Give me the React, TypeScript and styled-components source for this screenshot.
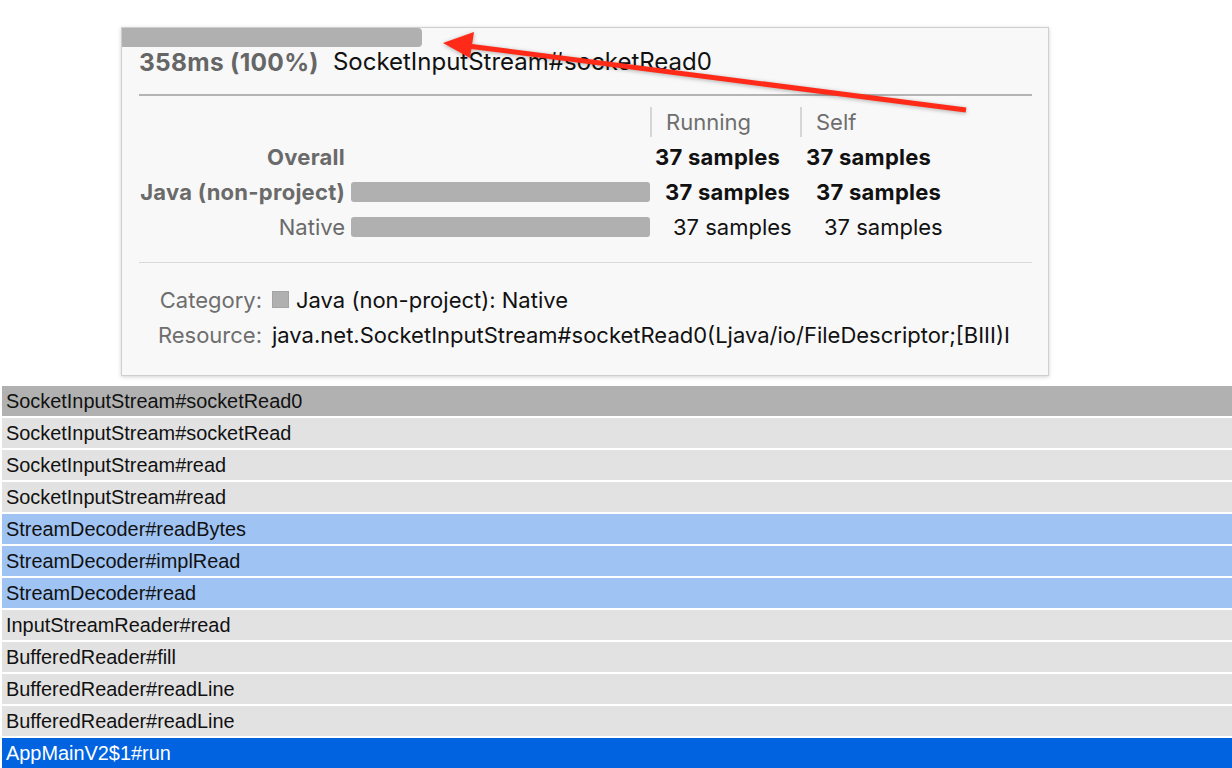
import React from 'react';
import styled, { createGlobalStyle } from 'styled-components';

const GlobalStyle = createGlobalStyle`
  html, body {
    margin: 0;
    padding: 0;
    background: #ffffff;
  }
  body {
    font-family: 'Liberation Sans', Arial, sans-serif;
    overflow: hidden;
  }
`;

const Page = styled.div`
  position: relative;
  width: 1232px;
  height: 768px;
  overflow: hidden;
  background: #ffffff;
`;

const GraphSpace = styled.div`
  height: 386px;
`;

const Frames = styled.div`
  display: flex;
  flex-direction: column;
  gap: 2px;
  padding-left: 2px;
`;

type Tone = 'selected' | 'plain' | 'project' | 'active';

const toneBg: Record<Tone, string> = {
  selected: '#b1b1b1',
  plain: '#e2e2e2',
  project: '#9fc3f3',
  active: '#0163e0',
};

const Frame = styled.div<{ $tone: Tone }>`
  height: 30px;
  display: flex;
  align-items: center;
  padding-left: 4px;
  background: ${(p) => toneBg[p.$tone]};
  color: ${(p) => (p.$tone === 'active' ? '#ffffff' : '#111111')};
  font-family: 'Liberation Sans', Arial, sans-serif;
  font-size: 19.9px;
  white-space: nowrap;
`;

const Tooltip = styled.div`
  position: absolute;
  left: 121px;
  top: 27px;
  width: 928px;
  height: 349px;
  box-sizing: border-box;
  background: #f8f8f8;
  border: 1px solid #cfcfcf;
  box-shadow: 0 1px 4px rgba(0, 0, 0, 0.18);
  font-family: Inter, 'Noto Sans', sans-serif;
  display: flex;
  flex-direction: column;
`;

const TopBar = styled.div`
  width: 300px;
  height: 19px;
  background: #b0b0b0;
  border-radius: 0 4px 4px 0;
`;

const Body = styled.div`
  padding: 0 16px 0 17px;
  display: flex;
  flex-direction: column;
`;

const Title = styled.div`
  display: flex;
  align-items: center;
  gap: 14px;
  height: 29px;
  font-size: 24px;
  color: #111;
  white-space: nowrap;
`;

const Duration = styled.span`
  font-weight: 700;
  font-size: 24.5px;
  letter-spacing: 0.3px;
  color: #666666;
`;

const TitleGap = styled.div`
  height: 18px;
`;

const Divider = styled.div<{ $strong?: boolean }>`
  height: ${(p) => (p.$strong ? '2px' : '1px')};
  background: ${(p) => (p.$strong ? '#b4b4b4' : '#d8d8d8')};
`;

const Table = styled.div`
  display: grid;
  grid-template-columns: 206px 305px 150px 1fr;
  grid-auto-rows: 35px;
  margin-top: 8px;
  margin-bottom: 18px;
  font-size: 22px;
`;

const Label = styled.div<{ $bold?: boolean }>`
  display: flex;
  align-items: center;
  justify-content: flex-end;
  color: #6a6a6a;
  font-weight: ${(p) => (p.$bold ? 700 : 400)};
  letter-spacing: ${(p) => (p.$bold ? '0.25px' : '0')};
  white-space: nowrap;
`;

const BarCell = styled.div`
  display: flex;
  align-items: center;
  padding-left: 6px;
`;

const Bar = styled.div`
  width: 299px;
  height: 20px;
  background: #b0b0b0;
  border-radius: 3px;
`;

const ColHead = styled.div`
  display: flex;
  align-items: center;
  padding-left: 14px;
  color: #6e6e6e;
  margin: 3px 0 0;
  border-left: 2px solid #d6d6d6;
  height: 30px;
`;

const Value = styled.div<{ $bold?: boolean; $indent: number }>`
  display: flex;
  align-items: center;
  padding-left: ${(p) => p.$indent}px;
  font-weight: ${(p) => (p.$bold ? 700 : 400)};
  letter-spacing: ${(p) => (p.$bold ? '0.25px' : '0')};
  color: #111;
  white-space: nowrap;
`;

const Details = styled.div`
  display: grid;
  grid-template-columns: 123px 1fr;
  column-gap: 10px;
  grid-auto-rows: 35px;
  margin-top: 19px;
  font-size: 22px;
`;

const DetailKey = styled.div`
  display: flex;
  align-items: center;
  justify-content: flex-end;
  color: #6e6e6e;
  white-space: nowrap;
`;

const DetailValue = styled.div`
  display: flex;
  align-items: center;
  gap: 7px;
  color: #111;
  white-space: nowrap;
`;

const Swatch = styled.span`
  width: 17px;
  height: 17px;
  background: #b0b0b0;
  border: 1px solid #a4a4a4;
  box-sizing: border-box;
`;

const ArrowLayer = styled.svg`
  position: absolute;
  left: 0;
  top: 0;
  pointer-events: none;
  filter: drop-shadow(0 1px 2px rgba(0, 0, 0, 0.3));
`;

const frames: { name: string; tone: Tone }[] = [
  { name: 'SocketInputStream#socketRead0', tone: 'selected' },
  { name: 'SocketInputStream#socketRead', tone: 'plain' },
  { name: 'SocketInputStream#read', tone: 'plain' },
  { name: 'SocketInputStream#read', tone: 'plain' },
  { name: 'StreamDecoder#readBytes', tone: 'project' },
  { name: 'StreamDecoder#implRead', tone: 'project' },
  { name: 'StreamDecoder#read', tone: 'project' },
  { name: 'InputStreamReader#read', tone: 'plain' },
  { name: 'BufferedReader#fill', tone: 'plain' },
  { name: 'BufferedReader#readLine', tone: 'plain' },
  { name: 'BufferedReader#readLine', tone: 'plain' },
  { name: 'AppMainV2$1#run', tone: 'active' },
];

const App: React.FC = () => {
  return (
    <Page>
      <GlobalStyle />
      <GraphSpace />
      <Frames>
        {frames.map((f, i) => (
          <Frame key={i} $tone={f.tone}>
            {f.name}
          </Frame>
        ))}
      </Frames>

      <Tooltip>
        <TopBar />
        <Body>
          <Title>
            <Duration>358ms (100%)</Duration>
            <span>SocketInputStream#socketRead0</span>
          </Title>
          <TitleGap />
          <Divider $strong />
          <Table>
            <div />
            <div />
            <ColHead>Running</ColHead>
            <ColHead>Self</ColHead>

            <Label $bold>Overall</Label>
            <BarCell />
            <Value $bold $indent={5}>37 samples</Value>
            <Value $bold $indent={6}>37 samples</Value>

            <Label $bold>Java (non-project)</Label>
            <BarCell>
              <Bar />
            </BarCell>
            <Value $bold $indent={15}>37 samples</Value>
            <Value $bold $indent={16}>37 samples</Value>

            <Label>Native</Label>
            <BarCell>
              <Bar />
            </BarCell>
            <Value $indent={23}>37 samples</Value>
            <Value $indent={24}>37 samples</Value>
          </Table>
          <Divider />
          <Details>
            <DetailKey>Category:</DetailKey>
            <DetailValue>
              <Swatch />
              Java (non-project): Native
            </DetailValue>
            <DetailKey>Resource:</DetailKey>
            <DetailValue>java.net.SocketInputStream#socketRead0(Ljava/io/FileDescriptor;[BIII)I</DetailValue>
          </Details>
        </Body>
      </Tooltip>

      <ArrowLayer width="1232" height="768" viewBox="0 0 1232 768">
        <line x1="966" y1="110" x2="468" y2="46" stroke="#ff2a17" strokeWidth="5" strokeLinecap="butt" />
        <polygon points="443,43 474,32 470,58" fill="#ff2a17" />
      </ArrowLayer>
    </Page>
  );
};

export default App;
